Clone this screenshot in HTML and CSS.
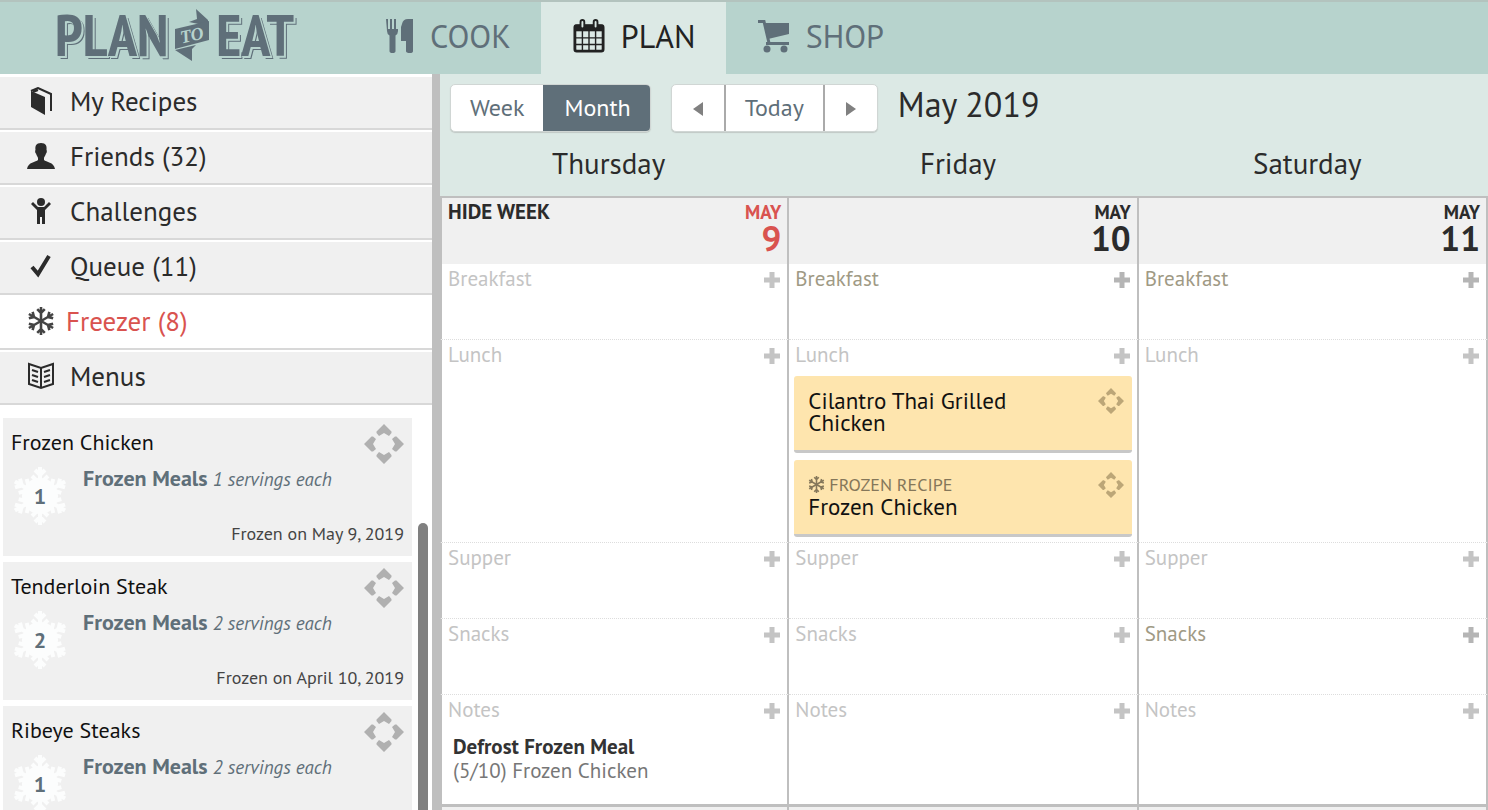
FILE: index.html
```
<!DOCTYPE html>
<html lang="en">
<head>
  <meta charset="UTF-8">
  <title>Plan to Eat - Planner</title>
  <meta name="viewport" content="width=device-width, initial-scale=1.0">
  <link rel="stylesheet" href="styles.css">
</head>
<body>

<!-- Shared icons -->
<svg class="icon-defs" aria-hidden="true">
  <symbol id="snow" viewBox="0 0 26 26">
    <g fill="none" stroke="currentColor" stroke-width="2.4">
      <g id="snow-axis">
        <path d="M13 0V26M9.500 2L13 5.500L16.500 2M9.500 24L13 20.500L16.500 24"/>
      </g>
      <use href="#snow-axis" transform="rotate(60 13 13)"/>
      <use href="#snow-axis" transform="rotate(120 13 13)"/>
    </g>
  </symbol>
  <symbol id="flake" viewBox="0 0 58 58">
    <circle cx="29" cy="29" r="18" fill="currentColor"/>
    <g fill="none" stroke="currentColor" stroke-width="4">
      <g id="flake-axis">
        <path d="M29 0V58M24 3L29 8L34 3M21 9L29 17L37 9M24 55L29 50L34 55M21 49L29 41L37 49"/>
      </g>
      <use href="#flake-axis" transform="rotate(60 29 29)"/>
      <use href="#flake-axis" transform="rotate(120 29 29)"/>
    </g>
  </symbol>
  <symbol id="move" viewBox="0 0 40 40">
    <g fill="currentColor">
      <path id="move-arm" d="M20 0L27.500 7.500V9L25 12L20 9L15 12L12.500 9V7.500Z"/>
      <use href="#move-arm" transform="rotate(90 20 20)"/>
      <use href="#move-arm" transform="rotate(180 20 20)"/>
      <use href="#move-arm" transform="rotate(270 20 20)"/>
    </g>
  </symbol>
  <symbol id="plus" viewBox="0 0 16 16">
    <path d="M5.500 0H10.500V5.500H16V10.500H10.500V16H5.500V10.500H0V5.500H5.500Z" fill="currentColor"/>
  </symbol>
</svg>

<header class="topbar">
  <a class="logo" href="#" aria-label="Plan to Eat">
    <span>PLAN</span>
    <svg class="logo-to" viewBox="0 0 36 52">
      <path d="M22 0L34 11V17L15 13L23 10Z"/>
      <path d="M1 20L35 12V31L1 40Z"/>
      <path d="M1 41L22 36L18 40V52L1 41Z"/>
      <text x="6" y="32" transform="rotate(-13 18 26)">TO</text>
    </svg>
    <span>EAT</span>
  </a>
  <nav class="tabs">
    <a class="tab" href="#">
      <svg width="28" height="36" viewBox="0 0 28 36" fill="currentColor">
        <path d="M0 1H2V11H4V1H6V11H8V1H10V11H12V0L12 13Q12 16 9.500 17.500V33Q9.500 35 6.500 35Q3.500 35 3.500 33V17.500Q1 16 1 13Z"/>
        <path d="M16 6Q17 1 22 1H27V33Q27 35 24 35Q20 35 20 33V23H15V9Z"/>
      </svg>
      <span>COOK</span>
    </a>
    <a class="tab active" href="#">
      <svg width="32" height="36" viewBox="0 0 34 36">
        <rect x="2" y="7" width="30" height="27" rx="2" fill="none" stroke="currentColor" stroke-width="3"/>
        <path d="M2 6H32V13H2Z" fill="currentColor"/>
        <path d="M10 12V34M17 12V34M24 12V34M2 20H32M2 27H32" stroke="currentColor" stroke-width="1.500"/>
        <rect x="8" y="1" width="4" height="9" rx="2" fill="#dce9e5" stroke="currentColor" stroke-width="2"/>
        <rect x="22" y="1" width="4" height="9" rx="2" fill="#dce9e5" stroke="currentColor" stroke-width="2"/>
      </svg>
      <span>PLAN</span>
    </a>
    <a class="tab" href="#">
      <svg width="32" height="34" viewBox="0 0 32 34">
        <path d="M0 2.500H6L11 24M8 24.500H31" fill="none" stroke="currentColor" stroke-width="3"/>
        <path d="M6 4H31V15L10 20Z" fill="currentColor"/>
        <circle cx="9" cy="30" r="3.500" fill="currentColor"/>
        <circle cx="26" cy="30" r="3.500" fill="currentColor"/>
      </svg>
      <span>SHOP</span>
    </a>
  </nav>
</header>

<div class="page">

  <aside class="sidebar">
    <ul class="menu">
      <li><a href="#">
        <svg viewBox="0 0 28 28" fill="currentColor">
          <path d="M4 4L18 10V28L4 20Z"/>
          <path d="M4 4L11 1L24 7V24M6 5L11 3" fill="none" stroke="currentColor" stroke-width="2"/>
        </svg>
        <span>My Recipes</span></a></li>
      <li><a href="#">
        <svg viewBox="0 0 28 28" fill="currentColor">
          <path d="M14 1C19 1 20 4 19.500 8C20 8 20 11 19 11.500C18.500 14 17 15 17 16V18C19 20 27 20 28 27H0C1 20 9 20 11 18V16C11 15 9.500 14 9 11.500C8 11 8 8 8.500 8C8 4 9 1 14 1Z"/>
        </svg>
        <span>Friends (32)</span></a></li>
      <li><a href="#">
        <svg viewBox="0 0 28 28" fill="currentColor">
          <circle cx="14" cy="5" r="4"/>
          <path d="M6 5L11 10H17L22 5L24 7L18 13V27H15V20H13V27H10V13L4 7Z"/>
        </svg>
        <span>Challenges</span></a></li>
      <li><a href="#">
        <svg viewBox="0 0 28 28">
          <path d="M5 15L11 22L22 4" fill="none" stroke="currentColor" stroke-width="4"/>
        </svg>
        <span>Queue (11)</span></a></li>
      <li class="selected"><a href="#">
        <svg><use href="#snow"/></svg>
        <span>Freezer (8)</span></a></li>
      <li><a href="#">
        <svg viewBox="0 0 28 28" fill="none" stroke="currentColor" stroke-width="2">
          <path d="M2 2L14 6L26 2V22L14 26L2 22ZM14 6V26"/>
          <path d="M5 8L11 10M5 13L11 15M5 18L11 20M23 8L17 10M23 13L17 15M23 18L17 20"/>
        </svg>
        <span>Menus</span></a></li>
    </ul>

    <div class="freezer">
      <div class="freezer-list">
        <article class="frozen">
          <h3>Frozen Chicken</h3>
          <svg class="move"><use href="#move"/></svg>
          <div class="count"><svg><use href="#flake"/></svg><span>1</span></div>
          <p class="meals"><b>Frozen Meals</b> <i>1 servings each</i></p>
          <p class="date">Frozen on May 9, 2019</p>
        </article>
        <article class="frozen">
          <h3>Tenderloin Steak</h3>
          <svg class="move"><use href="#move"/></svg>
          <div class="count"><svg><use href="#flake"/></svg><span>2</span></div>
          <p class="meals"><b>Frozen Meals</b> <i>2 servings each</i></p>
          <p class="date">Frozen on April 10, 2019</p>
        </article>
        <article class="frozen">
          <h3>Ribeye Steaks</h3>
          <svg class="move"><use href="#move"/></svg>
          <div class="count"><svg><use href="#flake"/></svg><span>1</span></div>
          <p class="meals"><b>Frozen Meals</b> <i>2 servings each</i></p>
        </article>
      </div>
      <div class="scrollbar"></div>
    </div>
  </aside>

  <main class="planner">
    <div class="toolbar">
      <div class="btn-group">
        <button type="button">Week</button>
        <button type="button" class="on">Month</button>
      </div>
      <div class="btn-group">
        <button type="button" class="arrow" aria-label="Previous"><svg viewBox="0 0 10 14"><path d="M10 0V14L0 7Z"/></svg></button>
        <button type="button">Today</button>
        <button type="button" class="arrow" aria-label="Next"><svg viewBox="0 0 10 14"><path d="M0 0V14L10 7Z"/></svg></button>
      </div>
      <h1>May 2019</h1>
    </div>

    <table class="calendar">
      <thead>
        <tr><th>Thursday</th><th>Friday</th><th>Saturday</th></tr>
      </thead>
      <tbody>
        <tr class="dates">
          <td><div class="day today"><button type="button">HIDE WEEK</button><span class="month">MAY</span><span class="num">9</span></div></td>
          <td><div class="day"><span class="month">MAY</span><span class="num">10</span></div></td>
          <td><div class="day"><span class="month">MAY</span><span class="num">11</span></div></td>
        </tr>
        <tr class="meal">
          <td><div class="slot"><span>Breakfast</span><button type="button" aria-label="Add"><svg><use href="#plus"/></svg></button></div></td>
          <td><div class="slot open"><span>Breakfast</span><button type="button" aria-label="Add"><svg><use href="#plus"/></svg></button></div></td>
          <td><div class="slot open"><span>Breakfast</span><button type="button" aria-label="Add"><svg><use href="#plus"/></svg></button></div></td>
        </tr>
        <tr class="meal">
          <td><div class="slot"><span>Lunch</span><button type="button" aria-label="Add"><svg><use href="#plus"/></svg></button></div></td>
          <td>
            <div class="slot"><span>Lunch</span><button type="button" aria-label="Add"><svg><use href="#plus"/></svg></button></div>
            <div class="recipes">
              <div class="recipe">
                <p class="name">Cilantro Thai Grilled Chicken</p>
                <svg class="move"><use href="#move"/></svg>
              </div>
              <div class="recipe">
                <div>
                  <p class="kind"><svg><use href="#snow"/></svg>FROZEN RECIPE</p>
                  <p class="name">Frozen Chicken</p>
                </div>
                <svg class="move"><use href="#move"/></svg>
              </div>
            </div>
          </td>
          <td><div class="slot"><span>Lunch</span><button type="button" aria-label="Add"><svg><use href="#plus"/></svg></button></div></td>
        </tr>
        <tr class="meal">
          <td><div class="slot"><span>Supper</span><button type="button" aria-label="Add"><svg><use href="#plus"/></svg></button></div></td>
          <td><div class="slot"><span>Supper</span><button type="button" aria-label="Add"><svg><use href="#plus"/></svg></button></div></td>
          <td><div class="slot"><span>Supper</span><button type="button" aria-label="Add"><svg><use href="#plus"/></svg></button></div></td>
        </tr>
        <tr class="meal">
          <td><div class="slot"><span>Snacks</span><button type="button" aria-label="Add"><svg><use href="#plus"/></svg></button></div></td>
          <td><div class="slot"><span>Snacks</span><button type="button" aria-label="Add"><svg><use href="#plus"/></svg></button></div></td>
          <td><div class="slot open"><span>Snacks</span><button type="button" aria-label="Add"><svg><use href="#plus"/></svg></button></div></td>
        </tr>
        <tr class="meal notes">
          <td>
            <div class="slot"><span>Notes</span><button type="button" aria-label="Add"><svg><use href="#plus"/></svg></button></div>
            <div class="note"><b>Defrost Frozen Meal</b><p>(5/10) Frozen Chicken</p></div>
          </td>
          <td><div class="slot"><span>Notes</span><button type="button" aria-label="Add"><svg><use href="#plus"/></svg></button></div></td>
          <td><div class="slot"><span>Notes</span><button type="button" aria-label="Add"><svg><use href="#plus"/></svg></button></div></td>
        </tr>
        <tr class="dates next"><td></td><td></td><td></td></tr>
      </tbody>
    </table>
  </main>

</div>

</body>
</html>
```
FILE: styles.css
```
* {
  box-sizing: border-box;
}

html, body {
  margin: 0;
  padding: 0;
  height: 100%;
}

body {
  display: flex;
  flex-direction: column;
  overflow: hidden;
  background: #fff;
  color: #2b2b2b;
  font-family: 'PT Sans', Lato, 'Open Sans', sans-serif;
}

h1, h3, p, ul {
  margin: 0;
  padding: 0;
}

a {
  color: inherit;
  text-decoration: none;
}

button {
  border: none;
  padding: 0;
  background: none;
  color: inherit;
  font-family: inherit;
  cursor: pointer;
}

.icon-defs {
  position: absolute;
  width: 0;
  height: 0;
}

/* Top bar */
.topbar {
  display: flex;
  flex: none;
  height: 74px;
  background: #b7d3cd;
  border-top: 2px solid #b3c3be;
  color: #5f6f79;
}

.logo {
  display: flex;
  align-items: center;
  gap: 6px;
  width: 354px;
  padding: 0 0 6px 55px;
  font-family: 'PT Sans Narrow', 'Liberation Sans Narrow', 'PT Sans', Lato, sans-serif;
  font-size: 58px;
  font-weight: bold;
  line-height: 1;
  text-shadow: 1px 1px 0 #b7d3cd, 2px 2px 0 #b7d3cd, 3px 3px 0 #5f6f79;
}

.logo-to {
  flex: none;
  width: 36px;
  height: 52px;
  fill: currentColor;
}

.logo-to text {
  fill: #b7d3cd;
  font-family: 'Liberation Serif', serif;
  font-size: 18px;
  font-style: italic;
  text-shadow: none;
}

.tabs {
  display: flex;
}

.tab {
  display: flex;
  align-items: center;
  gap: 16px;
  padding: 0 30px 4px 32px;
  font-size: 32px;
}

.tab.active {
  background: #dce9e5;
  color: #222;
}

.page {
  display: flex;
  flex: 1;
  min-height: 0;
}

/* Sidebar */
.sidebar {
  display: flex;
  flex-direction: column;
  flex: none;
  width: 440px;
  border-right: 8px solid #bfbfbf;
}

.menu {
  padding-top: 1px;
  list-style: none;
}

.menu li {
  margin-top: 2px;
  background: #f0f0f0;
  border-bottom: 2px solid #d8d8d8;
}

.menu a {
  display: flex;
  align-items: center;
  gap: 15px;
  height: 51px;
  padding: 0 0 4px 27px;
  font-size: 27px;
}

.menu svg {
  width: 28px;
  height: 28px;
}

.menu .selected {
  background: #fff;
}

.menu .selected a {
  gap: 11px;
}

.menu .selected svg {
  color: #444;
}

.menu .selected span {
  color: #d9534f;
}

.freezer {
  position: relative;
  flex: 1;
  min-height: 0;
  padding: 13px 20px 0 3px;
  overflow: hidden;
}

.frozen {
  display: grid;
  grid-template-columns: 72px 1fr 40px;
  grid-template-rows: 48px 44px 1fr;
  height: 138px;
  margin-bottom: 6px;
  padding: 0 8px;
  background: #f0f0f0;
}

.frozen h3 {
  grid-column: 1 / 3;
  align-self: center;
  color: #111;
  font-size: 22px;
  font-weight: normal;
}

.frozen .move {
  width: 40px;
  height: 40px;
  margin-top: 6px;
  color: #b0b0b0;
}

.count {
  display: grid;
  grid-row: 2 / 4;
  place-items: center;
  align-self: start;
  width: 58px;
  height: 60px;
  color: #5f6f79;
  font-size: 22px;
  font-weight: bold;
}

.count svg, .count span {
  grid-area: 1 / 1;
}

.count svg {
  width: 58px;
  height: 58px;
  color: #fcfdfd;
}

.meals {
  grid-column: 2 / 4;
  color: #5f6f79;
  font-size: 19px;
  line-height: 24px;
}

.meals b {
  font-size: 22px;
}

.date {
  grid-column: 2 / 4;
  align-self: center;
  color: #444;
  font-size: 18px;
  text-align: right;
}

.scrollbar {
  position: absolute;
  top: 118px;
  bottom: 0;
  right: 4px;
  width: 10px;
  background: #808080;
  border-radius: 5px 5px 0 0;
}

/* Planner */
.planner {
  flex: 1;
  min-width: 0;
  overflow: hidden;
  background: #dce9e5;
}

.toolbar {
  display: flex;
  align-items: center;
  gap: 20px;
  height: 62px;
  padding: 6px 0 0 10px;
}

.btn-group {
  display: flex;
  height: 48px;
  background: #fff;
  border: 1px solid #d0d6d4;
  border-radius: 5px;
  box-shadow: 0 1px 1px #c0c8c5;
  overflow: hidden;
}

.btn-group button {
  padding: 0 19px 2px;
  color: #5f6f79;
  font-size: 24px;
}

.btn-group button + button {
  border-left: 2px solid #aaa;
}

.btn-group .on {
  background: #5f6f79;
  color: #fff;
}

.btn-group button.on {
  border-left-color: #5f6f79;
}

.btn-group .arrow {
  padding: 0 21px 2px;
}

.arrow svg {
  width: 10px;
  height: 14px;
  fill: #808080;
}

.toolbar h1 {
  padding-bottom: 8px;
  font-size: 34px;
  font-weight: normal;
}

.calendar {
  width: 100%;
  border-collapse: separate;
  border-spacing: 0;
  table-layout: fixed;
}

.calendar thead th {
  height: 60px;
  padding: 0 12px 6px 0;
  font-size: 29px;
  font-weight: normal;
}

/* first column also carries the outer border */
.calendar th:first-child {
  width: calc(34% - 6px);
}

.calendar td {
  padding: 0;
  background: #fff;
  border-right: 2px solid #bfbfbf;
  vertical-align: top;
}

.calendar td:first-child {
  border-left: 2px solid #bfbfbf;
}

.calendar .dates td {
  height: 68px;
  background: #f0f0f0;
  border-top: 2px solid #bfbfbf;
}

.calendar .next td {
  border-top-width: 3px;
}

.day {
  display: grid;
  grid-template-columns: 1fr auto;
  padding: 4px 6px 0;
  font-weight: bold;
}

.day button {
  justify-self: start;
  font-size: 21px;
  font-weight: bold;
  line-height: 20px;
}

.day .month, .day .num {
  grid-column: 2;
  text-align: right;
}

.day .month {
  font-size: 19px;
  line-height: 20px;
}

.day .num {
  font-size: 35px;
  line-height: 32px;
}

.day.today .month, .day.today .num {
  color: #d9534f;
}

.meal td {
  height: 76px;
  border-bottom: 1px dotted #ddd;
}

.calendar .notes td {
  height: 109px;
  border-bottom: none;
}

.slot {
  display: flex;
  align-items: center;
  justify-content: space-between;
  height: 28px;
  padding: 0 7px 0 6px;
  color: #c4c4c4;
  font-size: 21px;
}

.slot.open span {
  color: #9f9a85;
}

.slot button {
  padding-top: 4px;
}

.slot svg {
  display: block;
  width: 16px;
  height: 16px;
}

.slot.open svg {
  color: #b5b5b5;
}

.recipes {
  display: flex;
  flex-direction: column;
  gap: 7px;
  padding: 8px 5px 5px;
}

.recipe {
  display: flex;
  align-items: center;
  justify-content: space-between;
  height: 77px;
  padding: 0 8px 3px 14px;
  background: #fee5ae;
  border-bottom: 3px solid #c8c8c8;
  border-radius: 3px;
}

.recipe .name {
  color: #111;
  font-size: 23px;
  line-height: 22px;
}

.recipe .kind {
  display: flex;
  align-items: center;
  gap: 4px;
  color: #85775a;
  font-size: 18px;
  line-height: 22px;
}

.recipe .kind svg {
  width: 17px;
  height: 17px;
}

.recipe .move {
  flex: none;
  width: 26px;
  height: 26px;
  margin: 0 0 22px 60px;
  color: #bca677;
}

.note {
  padding: 12px 11px 0;
  color: #777;
  font-size: 21px;
  line-height: 24px;
}

.note b {
  color: #333;
}
```
